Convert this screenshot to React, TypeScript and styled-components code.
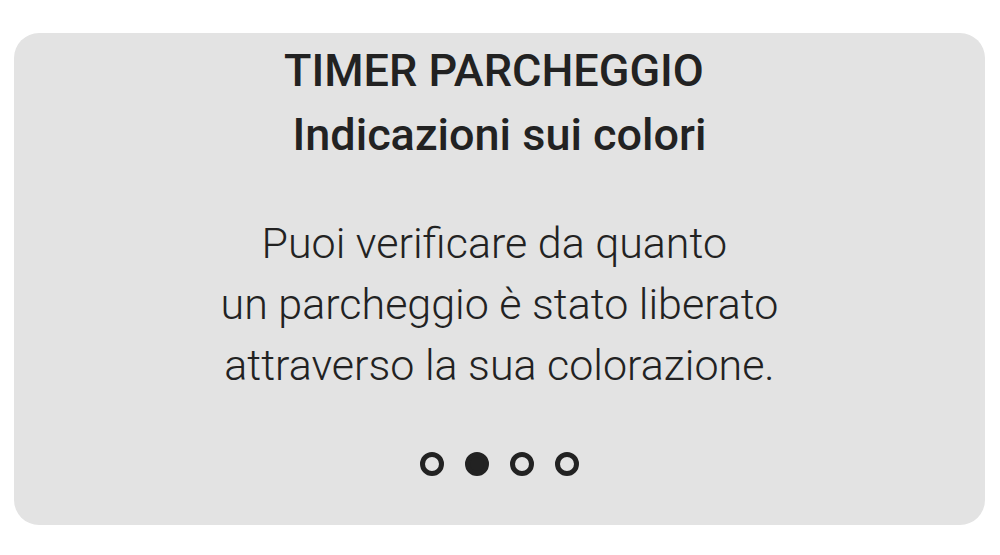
import styled, { createGlobalStyle } from 'styled-components'

const GlobalStyle = createGlobalStyle`
  html, body {
    margin: 0;
    padding: 0;
    background: #ffffff;
  }
  body {
    font-family: Roboto, 'Liberation Sans', sans-serif;
    color: #222222;
  }
`

const Page = styled.div`
  padding: 33px 15px 30px 14px;
`

const Card = styled.section`
  display: flex;
  flex-direction: column;
  align-items: center;
  height: 492px;
  box-sizing: border-box;
  padding-top: 6px;
  background-color: #e3e3e3;
  border-radius: 25px;
`

const Title = styled.h1`
  margin: 0;
  font-size: 45px;
  font-weight: 500;
  line-height: 64px;
  text-align: center;
  white-space: break-spaces;
  color: #222222;
`

const Body = styled.p`
  margin: 46px 0 0;
  font-size: 43px;
  font-weight: 300;
  line-height: 61px;
  text-align: center;
  white-space: break-spaces;
  color: #222222;
`

const Dots = styled.div`
  display: flex;
  gap: 21px;
  margin-top: 56px;
`

const Dot = styled.span<{ $active?: boolean }>`
  width: 24px;
  height: 24px;
  box-sizing: border-box;
  border-radius: 50%;
  border: 5px solid #222222;
  background: ${p => (p.$active ? '#222222' : 'transparent')};
`

export default function App () {
  const active = 1
  return (
    <>
      <GlobalStyle />
      <Page>
        <Card>
          <Title>
            {'TIMER PARCHEGGIO '}
            <br />
            Indicazioni sui colori
          </Title>
          <Body>
            {'Puoi verificare da quanto '}
            <br />
            un parcheggio è stato liberato
            <br />
            attraverso la sua colorazione.
          </Body>
          <Dots>
            {[0, 1, 2, 3].map(i => (
              <Dot key={i} $active={i === active} />
            ))}
          </Dots>
        </Card>
      </Page>
    </>
  )
}
